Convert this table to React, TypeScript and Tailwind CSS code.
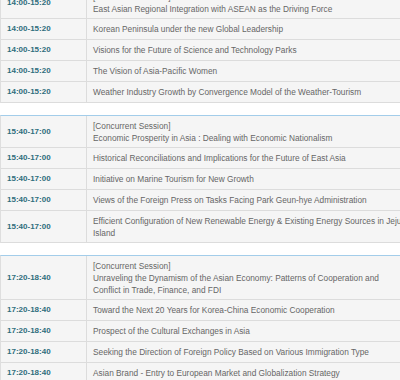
type Row = { time: string; label?: string; title: string };

const groups: Row[][] = [
  [
    {
      time: "14:00-15:20",
      label: "[Concurrent Session]",
      title: "East Asian Regional Integration with ASEAN as the Driving Force",
    },
    { time: "14:00-15:20", title: "Korean Peninsula under the new Global Leadership" },
    { time: "14:00-15:20", title: "Visions for the Future of Science and Technology Parks" },
    { time: "14:00-15:20", title: "The Vision of Asia-Pacific Women" },
    {
      time: "14:00-15:20",
      title: "Weather Industry Growth by Convergence Model of the Weather-Tourism",
    },
  ],
  [
    {
      time: "15:40-17:00",
      label: "[Concurrent Session]",
      title: "Economic Prosperity in Asia : Dealing with Economic Nationalism",
    },
    {
      time: "15:40-17:00",
      title: "Historical Reconciliations and Implications for the Future of East Asia",
    },
    { time: "15:40-17:00", title: "Initiative on Marine Tourism for New Growth" },
    {
      time: "15:40-17:00",
      title: "Views of the Foreign Press on Tasks Facing Park Geun-hye Administration",
    },
    {
      time: "15:40-17:00",
      title:
        "Efficient Configuration of New Renewable Energy & Existing Energy Sources in Jeju Island",
    },
  ],
  [
    {
      time: "17:20-18:40",
      label: "[Concurrent Session]",
      title:
        "Unraveling the Dynamism of the Asian Economy: Patterns of Cooperation and Conflict in Trade, Finance, and FDI",
    },
    {
      time: "17:20-18:40",
      title: "Toward the Next 20 Years for Korea-China Economic Cooperation",
    },
    { time: "17:20-18:40", title: "Prospect of the Cultural Exchanges in Asia" },
    {
      time: "17:20-18:40",
      title: "Seeking the Direction of Foreign Policy Based on Various Immigration Type",
    },
    {
      time: "17:20-18:40",
      title: "Asian Brand - Entry to European Market and Globalization Strategy",
    },
  ],
];

function ProgramTable({ rows, first }: { rows: Row[]; first?: boolean }) {
  return (
    <div
      className={
        "w-[410px] border-t border-l border-t-[#a3cdea] border-l-[#dedede] bg-[#f5f5f5] " +
        (first ? "-mt-[14px]" : "mt-[12px]")
      }
    >
      {rows.map((r, i) => (
        <div key={i} className="flex min-h-[21px] border-b border-[#dcdcdc]">
          <div className="flex w-[86px] shrink-0 items-center border-r border-[#dcdcdc] pl-[6px] text-[8px] font-bold text-[#2f6d7c]">
            {r.time}
          </div>
          <div className="flex-1 pl-[6px] pr-[5px] pt-[4px] pb-[3px] text-[8.3px] leading-[12px] text-[#666666]">
            {r.label && <div>{r.label}</div>}
            <div>{r.title}</div>
          </div>
        </div>
      ))}
    </div>
  );
}

export default function App() {
  return (
    <div className="h-[380px] w-[400px] overflow-hidden bg-white font-['Liberation_Sans',Arial,sans-serif]">
      {groups.map((g, i) => (
        <ProgramTable key={i} rows={g} first={i === 0} />
      ))}
    </div>
  );
}
